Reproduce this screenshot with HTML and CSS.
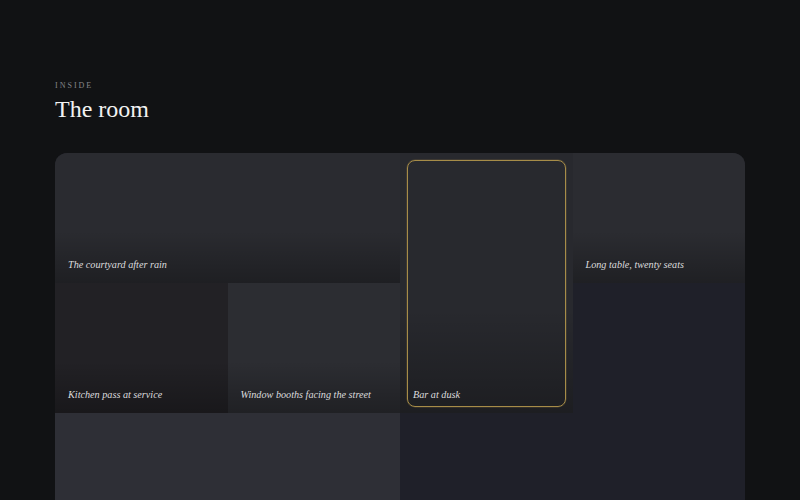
FILE: index.html
```html
<!DOCTYPE html>
<html>

<head>
    <meta name="viewport" content="width=device-width, initial-scale=1">
    <title>The room</title>
    <link rel="stylesheet" href="styles.css">
</head>

<body>
    <section class="room">
        <p class="eyebrow">Inside</p>
        <h2 class="title">The room</h2>

        <div class="gallery">
            <div class="tile wide courtyard"><span class="caption">The courtyard after rain</span></div>
            <div class="tile tall bar active"><span class="caption">Bar at dusk</span></div>
            <div class="tile table"><span class="caption">Long table, twenty seats</span></div>
            <div class="tile kitchen"><span class="caption">Kitchen pass at service</span></div>
            <div class="tile booths"><span class="caption">Window booths facing the street</span></div>
            <div class="tile wide terrace"></div>
        </div>
    </section>
</body>

</html>
```

FILE: styles.css
```css
body {
    margin: 0;
    padding: 0;
    background-color: #111214;
    font-family: "Liberation Serif", Georgia, serif;
    color: #ececec;
}

.room {
    padding: 81px 55px 0 55px;
}

.eyebrow {
    margin: 0;
    font-size: 8px;
    letter-spacing: 2px;
    text-transform: uppercase;
    color: #85868b;
}

.title {
    margin: 6px 0 0 0;
    font-size: 24px;
    font-weight: normal;
    color: #f2f2f2;
}

.gallery {
    margin-top: 30px;
    display: grid;
    grid-template-columns: repeat(4, 1fr);
    grid-template-rows: repeat(3, 130px);
    background-color: #1f2029;
    border-radius: 12px;
    overflow: hidden;
}

.tile {
    position: relative;
    display: flex;
    align-items: flex-end;
    padding: 0 13px 13px 13px;
    background-image: linear-gradient(to bottom, rgba(0, 0, 0, 0) 60%, rgba(0, 0, 0, 0.28));
}

.tile.wide {
    grid-column: span 2;
}

.tile.tall {
    grid-row: span 2;
}

.caption {
    font-style: italic;
    font-size: 10.2px;
    color: #dcdcde;
}

.courtyard {
    background-color: #2a2b30;
}

.bar {
    background-color: #28292e;
}

.table {
    background-color: #2b2c31;
}

.kitchen {
    background-color: #222125;
}

.booths {
    background-color: #2c2d32;
}

.terrace {
    background-color: #2e2f36;
    background-image: none;
}

.tile.active::after {
    content: "";
    position: absolute;
    top: 7px;
    left: 7px;
    right: 7px;
    bottom: 6px;
    border: 1px solid #a68c48;
    border-radius: 8px;
    box-shadow: 0 0 0 0.5px rgba(166, 140, 72, 0.35);
}
```
